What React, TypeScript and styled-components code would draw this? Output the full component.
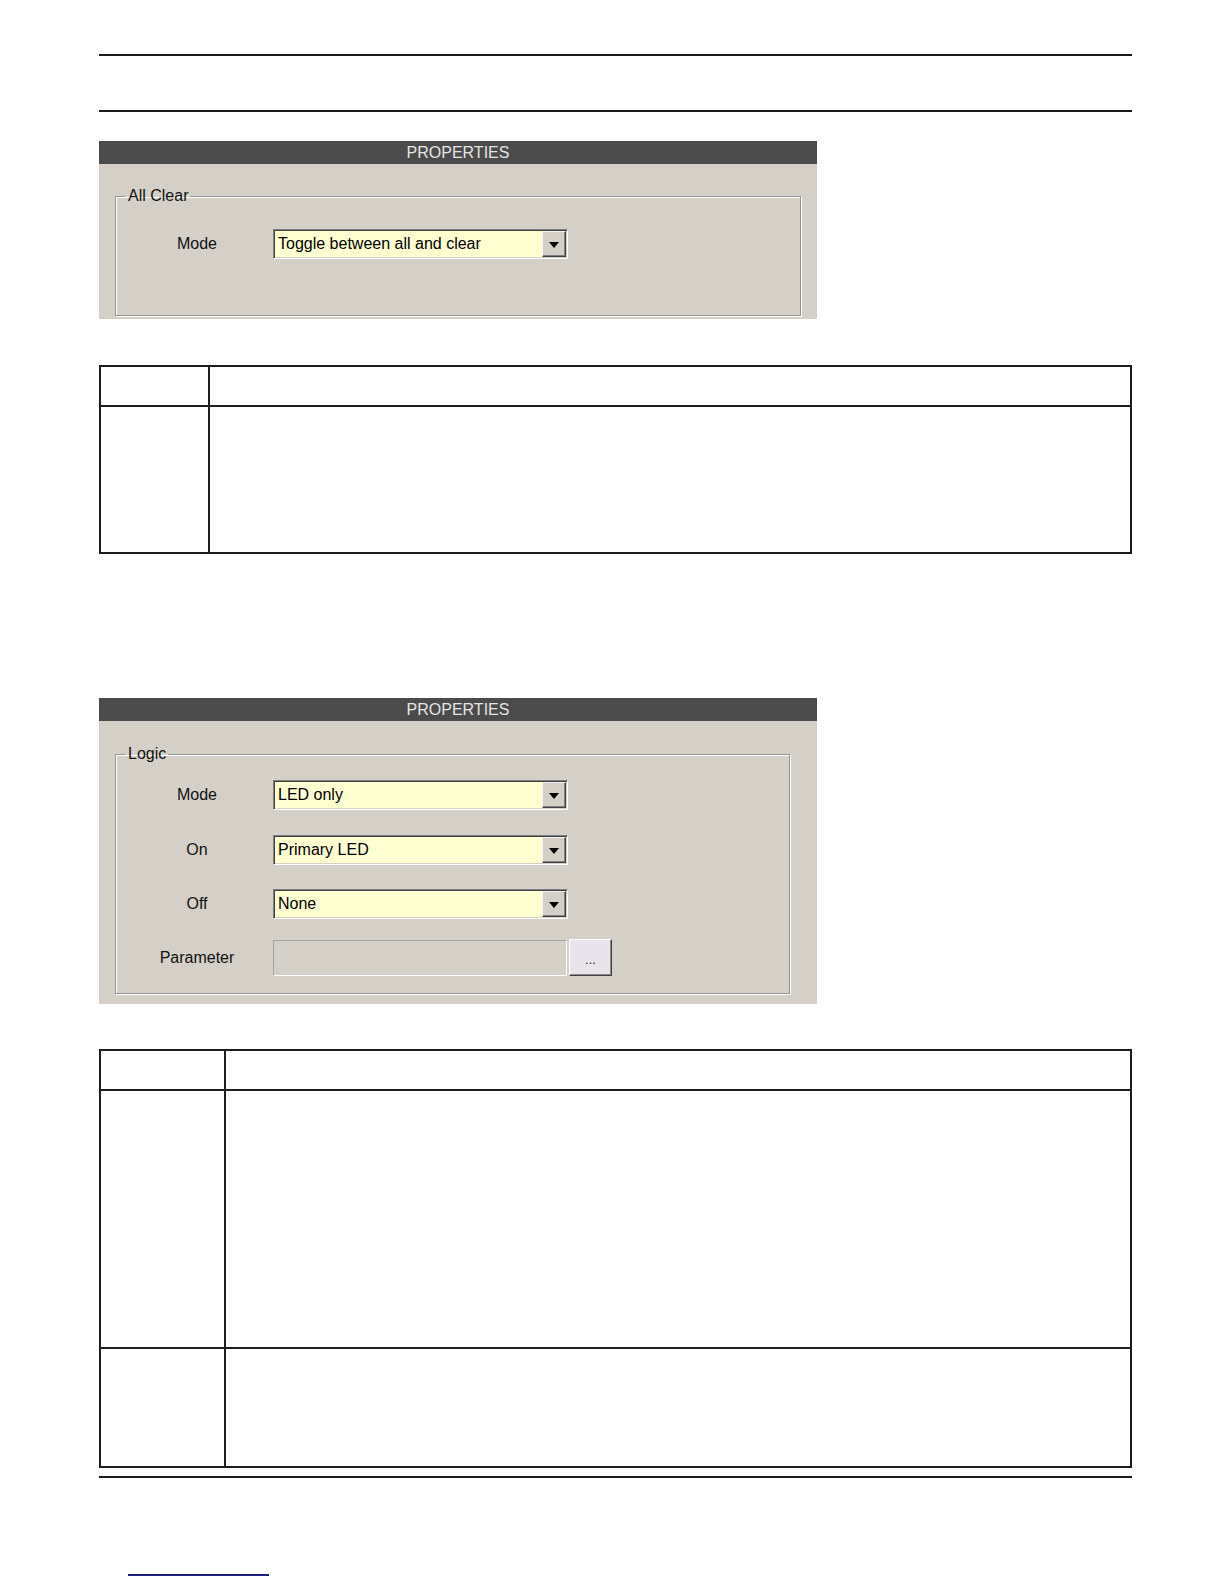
import styled, { createGlobalStyle } from "styled-components";

const GlobalStyle = createGlobalStyle`
    html, body {
        margin: 0;
        padding: 0;
        background: #ffffff;
    }
    body {
        font-family: "Liberation Sans", Arial, sans-serif;
        color: #111;
    }
`;

const Page = styled.div`
    width: 1033px;
    margin-left: 99px;
    padding-top: 54px;
`;

const Rule = styled.div<{ $gapTop?: number; $gapBottom?: number }>`
    height: 2px;
    background: #1b1b1b;
    margin-top: ${(p) => p.$gapTop ?? 0}px;
    margin-bottom: ${(p) => p.$gapBottom ?? 0}px;
`;

const Panel = styled.div<{ $gapBottom: number }>`
    width: 718px;
    background: #d4d0c8;
    margin-bottom: ${(p) => p.$gapBottom}px;
`;

const TitleBar = styled.div`
    height: 23px;
    background: #4b4b4b;
    color: #e4e4e4;
    font-size: 16px;
    line-height: 23px;
    text-align: center;
`;

const PanelBody = styled.div<{ $padTop: number; $padRight: number; $padBottom: number }>`
    padding: ${(p) => p.$padTop}px ${(p) => p.$padRight}px ${(p) => p.$padBottom}px 16px;
`;

const GroupBox = styled.fieldset<{ $padTop: number; $padBottom: number }>`
    margin: 0;
    padding: ${(p) => p.$padTop}px 0 ${(p) => p.$padBottom}px 16px;
    border: 1px solid #939393;
    box-shadow: inset 1px 1px 0 #ffffff, 1px 1px 0 #ffffff;
    min-inline-size: 0;
`;

const Legend = styled.legend`
    margin-left: -7px;
    padding: 0 2px 0 3px;
    font-size: 16px;
    line-height: 18px;
    color: #111;
`;

const FieldRow = styled.div<{ $top?: number }>`
    display: flex;
    align-items: center;
    margin-top: ${(p) => p.$top ?? 0}px;
`;

const FieldLabel = styled.span`
    width: 130px;
    margin-right: 11px;
    text-align: center;
    font-size: 16px;
    color: #111;
`;

const Select = styled.div`
    box-sizing: border-box;
    width: 295px;
    height: 30px;
    display: flex;
    align-items: center;
    justify-content: space-between;
    padding: 1px 1px 1px 4px;
    background: #ffffd2;
    border: 1px solid;
    border-color: #808080 #ffffff #ffffff #808080;
    box-shadow: inset 1px 1px 0 #404040, inset -1px -1px 0 #d4d0c8;
    font-size: 16px;
    color: #000;
`;

const DropButton = styled.div`
    box-sizing: border-box;
    width: 24px;
    height: 26px;
    background: #d4d0c8;
    border: 1px solid;
    border-color: #f4f4f4 #404040 #404040 #f4f4f4;
    box-shadow: inset -1px -1px 0 #808080;
    display: flex;
    align-items: center;
    justify-content: center;

    &::after {
        content: "";
        border-left: 5px solid transparent;
        border-right: 5px solid transparent;
        border-top: 6px solid #000;
        margin-top: 1px;
    }
`;

const TextField = styled.div`
    box-sizing: border-box;
    width: 294px;
    height: 36px;
    background: #d4d0c8;
    border: 1px solid;
    border-color: #a4a4a4 #ffffff #ffffff #a4a4a4;
`;

const DotsButton = styled.div`
    box-sizing: border-box;
    width: 43px;
    height: 37px;
    margin-left: 2px;
    background: #e8e4ec;
    border: 1px solid;
    border-color: #ffffff #404040 #404040 #ffffff;
    box-shadow: inset -1px -1px 0 #8a8a8a;
    display: flex;
    align-items: center;
    justify-content: center;
    font-size: 13px;
    padding-top: 4px;
    color: #222;
`;

const InfoTable = styled.table<{ $gapBottom?: number }>`
    width: 1033px;
    border-collapse: collapse;
    border: 2px solid #1e1e1e;
    margin-bottom: ${(p) => p.$gapBottom ?? 0}px;

    td {
        border: 2px solid #1e1e1e;
        padding: 0;
        vertical-align: top;
    }
`;

const KeyCell = styled.td<{ $width: number }>`
    width: ${(p) => p.$width}px;
`;

const LinkLine = styled.div`
    width: 141px;
    height: 2px;
    margin: 96px 0 0 29px;
    background: #1f217a;
`;

function Dropdown({ label, value, top }: { label: string; value: string; top?: number }) {
    return (
        <FieldRow $top={top}>
            <FieldLabel>{label}</FieldLabel>
            <Select>
                <span>{value}</span>
                <DropButton />
            </Select>
        </FieldRow>
    );
}

export default function App() {
    return (
        <>
            <GlobalStyle />
            <Page>
                <Rule $gapBottom={54} />
                <Rule $gapBottom={29} />

                <Panel $gapBottom={46}>
                    <TitleBar>PROPERTIES</TitleBar>
                    <PanelBody $padTop={23} $padRight={16} $padBottom={3}>
                        <GroupBox $padTop={24} $padBottom={56}>
                            <Legend>All Clear</Legend>
                            <Dropdown label="Mode" value="Toggle between all and clear" />
                        </GroupBox>
                    </PanelBody>
                </Panel>

                <InfoTable $gapBottom={144}>
                    <tbody>
                        <tr style={{ height: 40 }}>
                            <KeyCell $width={107} />
                            <td />
                        </tr>
                        <tr style={{ height: 147 }}>
                            <KeyCell $width={107} />
                            <td />
                        </tr>
                    </tbody>
                </InfoTable>

                <Panel $gapBottom={45}>
                    <TitleBar>PROPERTIES</TitleBar>
                    <PanelBody $padTop={24} $padRight={27} $padBottom={10}>
                        <GroupBox $padTop={17} $padBottom={17}>
                            <Legend>Logic</Legend>
                            <Dropdown label="Mode" value="LED only" />
                            <Dropdown label="On" value="Primary LED" top={25} />
                            <Dropdown label="Off" value="None" top={24} />
                            <FieldRow $top={20}>
                                <FieldLabel>Parameter</FieldLabel>
                                <TextField />
                                <DotsButton>...</DotsButton>
                            </FieldRow>
                        </GroupBox>
                    </PanelBody>
                </Panel>

                <InfoTable>
                    <tbody>
                        <tr style={{ height: 40 }}>
                            <KeyCell $width={123} />
                            <td />
                        </tr>
                        <tr style={{ height: 258 }}>
                            <KeyCell $width={123} />
                            <td />
                        </tr>
                        <tr style={{ height: 119 }}>
                            <KeyCell $width={123} />
                            <td />
                        </tr>
                    </tbody>
                </InfoTable>

                <Rule $gapTop={8} />
                <LinkLine />
            </Page>
        </>
    );
}
